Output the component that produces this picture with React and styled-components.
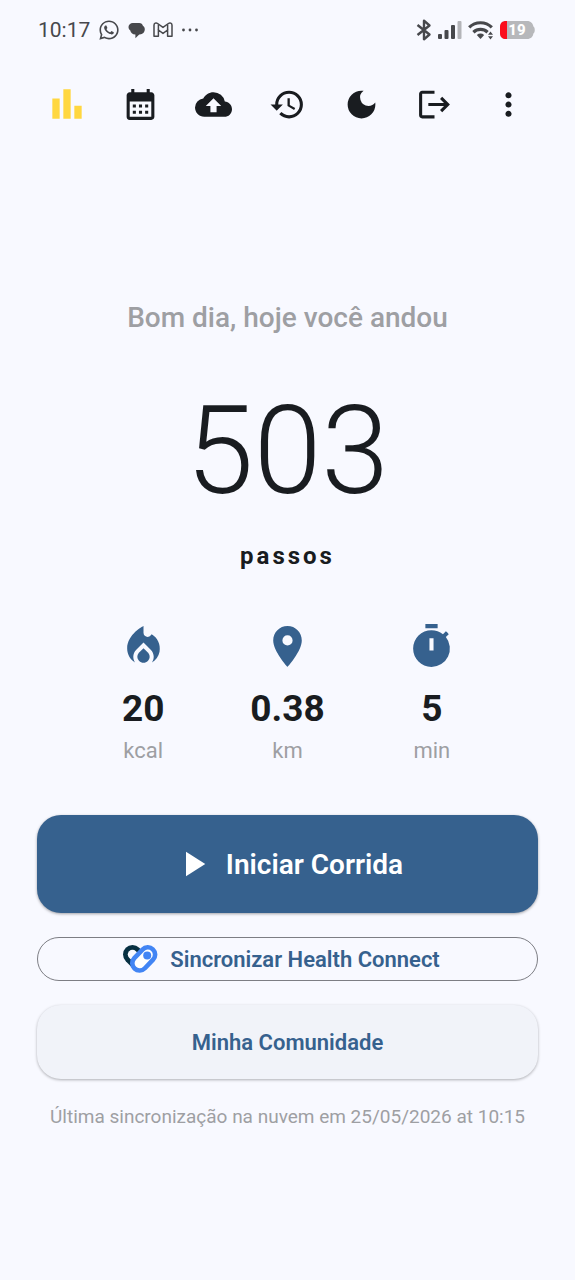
import React from 'react';
import styled, { createGlobalStyle } from 'styled-components';
import {
  MdBackup,
  MdBarChart,
  MdCalendarMonth,
  MdDarkMode,
  MdHistory,
  MdLocalFireDepartment,
  MdLocationOn,
  MdLogout,
  MdMoreVert,
  MdPlayArrow,
  MdTimer
} from 'react-icons/md';
import { FaWhatsapp } from 'react-icons/fa';

const colors = {
  background: '#f8f9ff',
  surface: '#f1f3f9',
  primary: '#36618e',
  text: '#191c20',
  muted: '#9e9fa3',
  status: '#47484c',
  outline: '#7d7e84',
  accent: '#ffd740'
};

const GlobalStyle = createGlobalStyle`
  * {
    box-sizing: border-box;
  }

  body {
    margin: 0;
    background: ${colors.background};
    color: ${colors.text};
    font-family: Roboto, 'Liberation Sans', sans-serif;
  }

  button {
    font-family: inherit;
    cursor: pointer;
  }
`;

const Screen = styled.div`
  display: flex;
  flex-direction: column;
  min-height: 100vh;
`;

const StatusBar = styled.div`
  display: flex;
  align-items: center;
  justify-content: space-between;
  height: 60px;
  padding: 0 39px 0 38px;
  color: ${colors.status};
`;

const StatusGroup = styled.div`
  display: flex;
  align-items: center;
  gap: ${props => props.$gap};
`;

const Clock = styled.time`
  font-size: 21px;
  line-height: 24px;
`;

const Toolbar = styled.nav`
  display: flex;
  align-items: center;
  height: 88px;
  padding: 0 30px;
`;

const ToolButton = styled.button`
  flex: 1;
  display: flex;
  align-items: center;
  justify-content: center;
  height: 100%;
  padding: 0;
  border: none;
  background: none;
  color: ${props => (props.$active ? colors.accent : colors.text)};
`;

const Content = styled.main`
  display: flex;
  flex-direction: column;
  padding: 154px 37px 24px;
`;

const Greeting = styled.p`
  margin: 0;
  color: ${colors.muted};
  font-size: 28px;
  font-weight: 500;
  line-height: 32px;
  text-align: center;
`;

const StepCount = styled.h1`
  margin: 46px 0 0;
  font-size: 122px;
  font-weight: 300;
  line-height: 144px;
  text-align: center;
`;

const StepLabel = styled.p`
  margin: 16px 0 0;
  font-size: 24px;
  font-weight: 700;
  line-height: 32px;
  letter-spacing: 3px;
  text-align: center;
`;

const Stats = styled.section`
  display: grid;
  grid-template-columns: repeat(3, 1fr);
  margin-top: 50px;
  padding: 0 34px;
`;

const Stat = styled.div`
  display: flex;
  flex-direction: column;
  align-items: center;

  svg {
    color: ${colors.primary};
  }
`;

const StatValue = styled.strong`
  margin-top: 16px;
  font-size: 37px;
  font-weight: 700;
  line-height: 44px;
`;

const StatUnit = styled.span`
  margin-top: 8px;
  color: ${colors.muted};
  font-size: 22px;
  line-height: 24px;
`;

const Actions = styled.section`
  display: flex;
  flex-direction: column;
  margin-top: 52px;
`;

const ActionButton = styled.button`
  display: flex;
  align-items: center;
  justify-content: center;
  width: 100%;
  padding: 0;
  border: none;
  border-radius: 24px;
  color: ${colors.primary};
  font-size: 22px;
  font-weight: 600;
`;

const StartButton = styled(ActionButton)`
  gap: 12px;
  height: 98px;
  background: ${colors.primary};
  color: #ffffff;
  font-size: 28px;
  box-shadow: 0 1px 3px rgba(0, 0, 0, 0.35);
`;

const SyncButton = styled(ActionButton)`
  gap: 12px;
  height: 44px;
  margin-top: 24px;
  padding-right: 12px;
  border: 1px solid ${colors.outline};
  background: transparent;
`;

const CommunityButton = styled(ActionButton)`
  height: 74px;
  margin-top: 24px;
  background: ${colors.surface};
  box-shadow: 0 1px 3px rgba(0, 0, 0, 0.3);
`;

const SyncNote = styled.p`
  margin: 26px 0 0;
  color: ${colors.muted};
  font-size: 19px;
  line-height: 24px;
  text-align: center;
`;

const ChatIcon = () => (
  <svg width="17" height="17" viewBox="0 0 17 17" fill="currentColor" aria-hidden="true">
    <path d="M4.800 1h6.400c2 0 3.400 1.200 3.700 2.800 1.300.7 1.900 2 1.900 3.400 0 3-2.200 5.200-5 5.200h-.6L7.400 16.200v-3.600C4.400 12.300 2.600 10.600 2.300 8.400 1.100 7.600.5 6.300.5 5 .5 2.700 2.400 1 4.800 1z" />
  </svg>
);

const GmailIcon = () => (
  <svg width="20" height="16" viewBox="0 0 20 16" fill="none" stroke="currentColor" strokeWidth="1.500" strokeLinejoin="round" aria-hidden="true">
    <path d="M1 3.200c0-2 2-2.800 3.600-1.700L10 5.400l5.400-3.900C17 .4 19 1.200 19 3.200v11h-4.400V8L10 11.400 5.400 8v6.200H1z" />
    <path d="M5.400 8V2.500M14.600 8V2.500" />
  </svg>
);

const DotsIcon = () => (
  <svg width="18" height="4" viewBox="0 0 18 4" fill="currentColor" aria-hidden="true">
    <circle cx="2.500" cy="2" r="1.400" />
    <circle cx="9" cy="2" r="1.400" />
    <circle cx="15.500" cy="2" r="1.400" />
  </svg>
);

const BluetoothIcon = () => (
  <svg width="16" height="22" viewBox="0 0 16 22" fill="none" stroke="currentColor" strokeWidth="2.400" strokeLinejoin="round" aria-hidden="true">
    <path d="M1.500 6l12 9.500L8 20.300V1.700l5.500 4.800-12 9.500" />
  </svg>
);

const SignalIcon = () => (
  <svg width="24" height="20" viewBox="0 0 24 20" fill="currentColor" aria-hidden="true">
    <rect x="0" y="14" width="4" height="5" rx="1" />
    <rect x="6.500" y="10" width="4" height="9" rx="1" />
    <rect x="13" y="5" width="4" height="14" rx="1" />
    <rect x="19.500" y="1" width="4" height="18" rx="1" fill="#b4b5b9" />
  </svg>
);

const WifiIcon = () => (
  <svg width="26" height="20" viewBox="0 0 26 20" fill="none" stroke="currentColor" strokeWidth="3.200" aria-hidden="true">
    <path d="M1.200 7.400a16 16 0 0 1 22.600 0" />
    <path d="M5.400 12.200a10.500 10.500 0 0 1 14.200 0" />
    <path d="M8.800 15a6 6 0 0 1 7.400 0L12.500 19z" fill="currentColor" stroke="none" />
    <path d="M20 14.800l2.500-3.200 2.500 3.200zM20 16.200l2.500 3.200 2.500-3.200z" fill="currentColor" stroke="none" />
  </svg>
);

const BatteryIcon = () => (
  <svg width="36" height="20" viewBox="0 0 36 20" role="img" aria-label="Bateria 19%">
    <path d="M6 1h21c4 0 6 2.500 6.400 5.500 1.800.5 1.800 6.500 0 7C33 16.500 31 19 27 19H6c-3.500 0-6-2-6-6V7c0-4 2.500-6 6-6z" fill="#b7b8bb" />
    <path d="M7 1v18H6c-3.500 0-6-2-6-6V7c0-4 2.500-6 6-6z" fill="#fb0d1b" />
    <text x="17" y="15" fill="#ffffff" fontSize="15" fontWeight="800" textAnchor="middle">19</text>
  </svg>
);

const HealthConnectIcon = () => (
  <svg width="35" height="28" viewBox="0 0 35 28" fill="none" strokeLinecap="round" aria-hidden="true">
    <path d="M9.500 9.500l7 7" stroke="#073042" strokeWidth="19" />
    <path d="M9.500 9.500l7 7" stroke={colors.background} strokeWidth="9.500" />
    <path d="M24.800 9.600l-8.200 8.600" stroke="#4285f4" strokeWidth="19.200" />
    <path d="M24.800 9.600l-8.200 8.600" stroke="#ffffff" strokeWidth="10" />
    <circle cx="24.200" cy="10.400" r="4" fill="#4285f4" />
  </svg>
);

const ferramentas = [
  { id: 'estatisticas', label: 'Estatísticas', icon: MdBarChart, size: 44, active: true },
  { id: 'calendario', label: 'Calendário', icon: MdCalendarMonth, size: 37 },
  { id: 'backup', label: 'Backup na nuvem', icon: MdBackup, size: 37 },
  { id: 'historico', label: 'Histórico', icon: MdHistory, size: 37 },
  { id: 'tema', label: 'Tema escuro', icon: MdDarkMode, size: 37 },
  { id: 'sair', label: 'Sair', icon: MdLogout, size: 37 },
  { id: 'mais', label: 'Mais opções', icon: MdMoreVert, size: 37 }
];

const metricas = [
  { unit: 'kcal', value: '20', icon: MdLocalFireDepartment },
  { unit: 'km', value: '0.38', icon: MdLocationOn },
  { unit: 'min', value: '5', icon: MdTimer }
];

const App = () => (
  <Screen>
    <GlobalStyle />

    <StatusBar>
      <StatusGroup $gap="8px">
        <Clock>10:17</Clock>
        <FaWhatsapp size={22} />
        <ChatIcon />
        <GmailIcon />
        <DotsIcon />
      </StatusGroup>
      <StatusGroup $gap="6px">
        <BluetoothIcon />
        <SignalIcon />
        <WifiIcon />
        <BatteryIcon />
      </StatusGroup>
    </StatusBar>

    <Toolbar>
      {ferramentas.map(({ id, label, icon: Icon, size, active }) => (
        <ToolButton key={id} type="button" aria-label={label} $active={active}>
          <Icon size={size} />
        </ToolButton>
      ))}
    </Toolbar>

    <Content>
      <Greeting>Bom dia, hoje você andou</Greeting>
      <StepCount>503</StepCount>
      <StepLabel>passos</StepLabel>

      <Stats>
        {metricas.map(({ unit, value, icon: Icon }) => (
          <Stat key={unit}>
            <Icon size={49} />
            <StatValue>{value}</StatValue>
            <StatUnit>{unit}</StatUnit>
          </Stat>
        ))}
      </Stats>

      <Actions>
        <StartButton type="button">
          <MdPlayArrow size={42} />
          Iniciar Corrida
        </StartButton>
        <SyncButton type="button">
          <HealthConnectIcon />
          Sincronizar Health Connect
        </SyncButton>
        <CommunityButton type="button">Minha Comunidade</CommunityButton>
      </Actions>

      <SyncNote>Última sincronização na nuvem em 25/05/2026 at 10:15</SyncNote>
    </Content>
  </Screen>
);

export default App;
